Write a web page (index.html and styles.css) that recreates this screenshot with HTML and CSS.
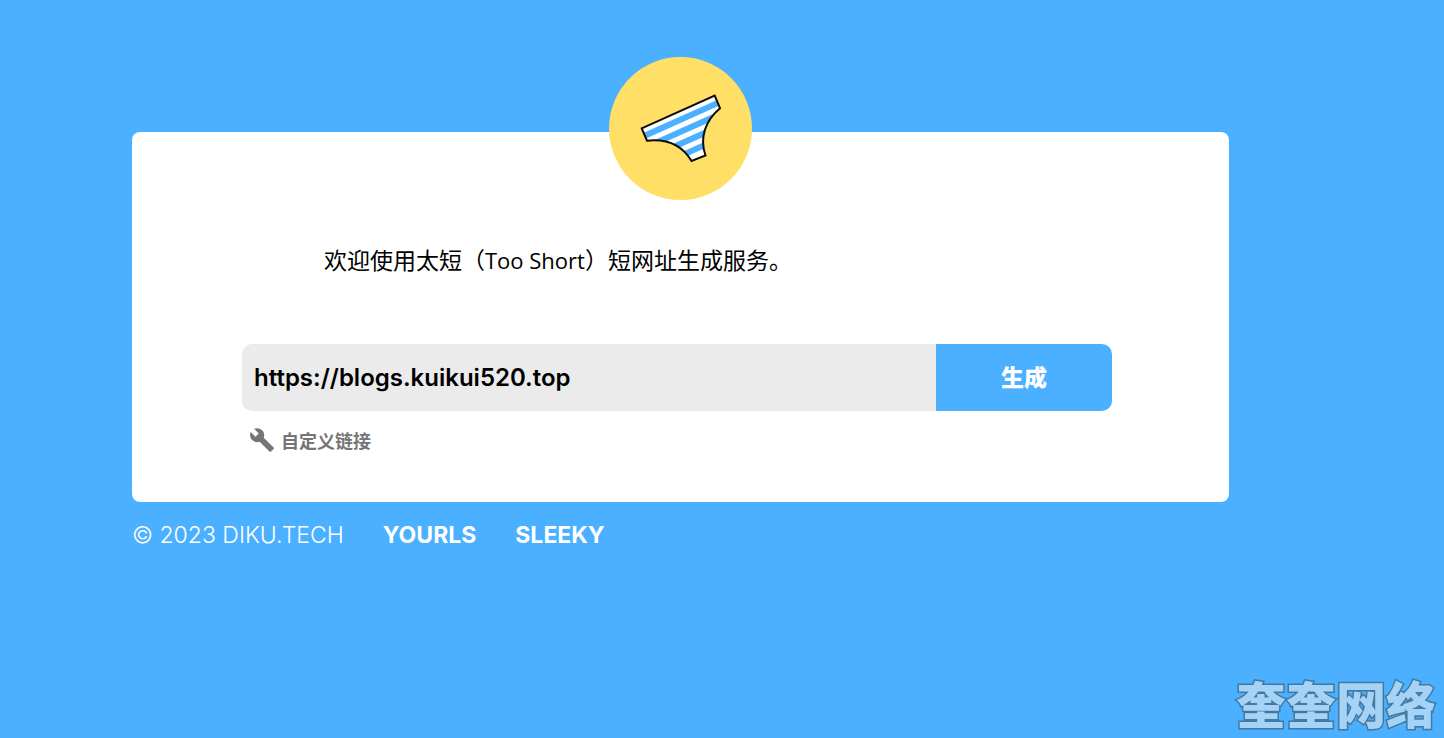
FILE: index.html
```html
<!DOCTYPE html>
<html lang="zh-CN">
<head>
<meta charset="utf-8">
<meta name="viewport" content="width=device-width, initial-scale=1">
<title>太短 Too Short</title>
<link rel="stylesheet" href="styles.css">
</head>
<body>
<div class="page">
  <main class="card">
    <svg class="logo" viewBox="0 0 143 143" role="img" aria-label="Too Short">
      <defs>
        <clipPath id="brief">
          <path d="M32.7 71.3 105.7 38.7 111 51.2C97 63 90 80 96.5 98.5L82.5 104C73 88 59 81.500 38 83.700Z"/>
        </clipPath>
      </defs>
      <circle cx="71.500" cy="71.500" r="71.500" fill="#ffdf66"/>
      <g clip-path="url(#brief)">
        <rect width="143" height="143" fill="#fff"/>
        <g transform="translate(32.7 71.3) rotate(-24.1)" fill="#4bb0ff">
          <rect x="-10" y="5" width="110" height="6"/>
          <rect x="-10" y="16" width="110" height="6"/>
          <rect x="-10" y="27" width="110" height="6"/>
          <rect x="-10" y="38" width="110" height="6"/>
        </g>
      </g>
      <path d="M32.7 71.3 105.7 38.7 111 51.2C97 63 90 80 96.5 98.5L82.5 104C73 88 59 81.500 38 83.700Z" fill="none" stroke="#0b0b0b" stroke-width="2"/>
    </svg>
    <p class="welcome">欢迎使用太短（<span class="latin">Too Short</span>）短网址生成服务。</p>
    <form class="shorten">
      <div class="row">
        <input class="url" type="text" aria-label="网址" value="https://blogs.kuikui520.top">
        <button class="submit" type="button">生成</button>
      </div>
      <button class="custom" type="button">
        <svg class="wrench" viewBox="0 0 24 24" aria-hidden="true"><path fill="currentColor" d="M22.7 19l-9.1-9.1c.9-2.3.4-5-1.500-6.900-2-2-5-2.400-7.400-1.300L9 6 6 9 1.600 4.700C.4 7.100.9 10.100 2.900 12.100c1.900 1.900 4.600 2.400 6.900 1.500l9.100 9.100c.4.4 1 .4 1.400 0l2.300-2.300c.5-.4.5-1.100.1-1.400z"/></svg>
        <span>自定义链接</span>
      </button>
    </form>
  </main>
  <footer class="footer">
    <span>© 2023 DIKU.TECH</span>
    <a href="#yourls">YOURLS</a>
    <a href="#sleeky">SLEEKY</a>
  </footer>
</div>
<div class="mark">奎奎网络</div>
</body>
</html>
```
FILE: styles.css
```css
* { box-sizing: border-box; }

body {
  margin: 0;
  min-height: 100vh;
  background: #4bb0ff;
  color: #000;
  font-family: Inter, "Noto Sans CJK SC", sans-serif;
}

.page { padding: 57px 215px 40px 132px; }

.card {
  display: flex;
  flex-direction: column;
  margin-top: 75px;
  padding: 0 117px 47px 110px;
  background: #fff;
  border-radius: 8px;
}

.logo {
  width: 143px;
  height: 143px;
  margin-top: -75px;
  margin-left: 367px;
}

.welcome {
  margin: 41px 0 65px;
  padding-left: 82px;
  font-family: "Open Sans", "Noto Sans CJK SC", sans-serif;
  font-size: 23px;
  font-weight: 400;
  line-height: 38px;
}

.latin { font-size: 22px; }

.row {
  display: flex;
  height: 67px;
  border-radius: 10px;
  overflow: hidden;
}

.url {
  flex: 1;
  min-width: 0;
  padding: 0 12px;
  border: 0;
  background: #ebebeb;
  color: #000;
  font-family: inherit;
  font-size: 24px;
  font-weight: 600;
}

.submit {
  width: 176px;
  padding: 0 0 4px;
  border: 0;
  background: #4bb0ff;
  color: #fff;
  font-family: inherit;
  font-size: 23px;
  font-weight: 900;
}

.custom {
  display: flex;
  align-items: center;
  gap: 6px;
  height: 30px;
  margin-top: 14px;
  padding: 0 7px;
  border: 0;
  background: none;
  color: #757575;
  font-family: inherit;
  font-size: 18px;
  font-weight: 700;
}

.wrench {
  width: 26px;
  height: 26px;
}

.footer {
  display: flex;
  gap: 39px;
  padding-top: 17px;
  color: #fff;
  font-size: 23px;
  font-weight: 300;
  line-height: 32px;
}

.footer a {
  color: #fff;
  font-weight: 700;
  text-decoration: none;
}

.mark {
  position: fixed;
  right: 8px;
  bottom: 6px;
  color: #a5d3f7;
  font-size: 50px;
  font-weight: 900;
  line-height: 52px;
  paint-order: stroke fill;
  -webkit-text-stroke: 3px #44799f;
}
```
